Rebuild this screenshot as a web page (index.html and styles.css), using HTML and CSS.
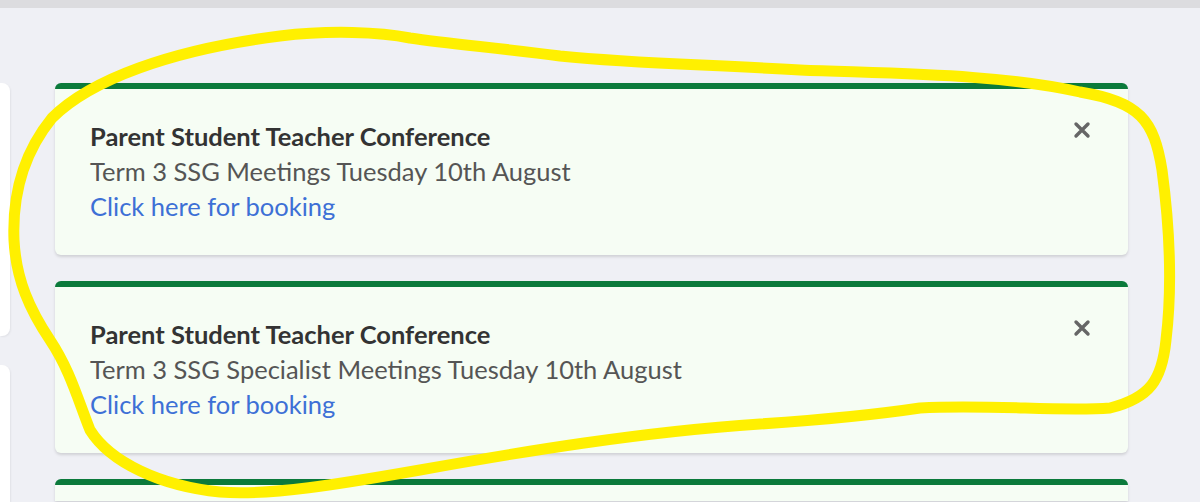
FILE: index.html
```html
<!DOCTYPE html>
<html>
<head>
<meta charset="utf-8">
<link rel="stylesheet" href="styles.css">
</head>
<body>
<div class="topbar"></div>
<div class="page">
  <aside class="side">
    <div class="side-block side-block-1"></div>
    <div class="side-block side-block-2"></div>
  </aside>
  <main class="feed">
    <div class="notice">
      <div class="notice-body">
        <div class="notice-title">Parent Student Teacher Conference</div>
        <div class="notice-text">Term 3 SSG Meetings Tuesday 10th August</div>
        <a class="notice-link" href="#">Click here for booking</a>
      </div>
      <button class="close" aria-label="Close">
        <svg width="22" height="22" viewBox="0 0 22 22"><path d="M5 5 L17 17 M17 5 L5 17" stroke="#666" stroke-width="3.4" stroke-linecap="round"/></svg>
      </button>
    </div>
    <div class="notice">
      <div class="notice-body">
        <div class="notice-title">Parent Student Teacher Conference</div>
        <div class="notice-text">Term 3 SSG Specialist Meetings Tuesday 10th August</div>
        <a class="notice-link" href="#">Click here for booking</a>
      </div>
      <button class="close" aria-label="Close">
        <svg width="22" height="22" viewBox="0 0 22 22"><path d="M5 5 L17 17 M17 5 L5 17" stroke="#666" stroke-width="3.4" stroke-linecap="round"/></svg>
      </button>
    </div>
    <div class="notice notice-partial"></div>
  </main>
</div>
<svg class="annotation" width="1200" height="502" viewBox="0 0 1200 502">
  <path d="M52 118 C 90 80, 170 50, 280 36 C 330 30, 380 32, 410 38 C 450 44, 500 48, 560 56 C 640 64, 700 64, 800 70 C 900 74, 1000 74, 1080 92 C 1140 102, 1154 120, 1162 170 C 1170 230, 1172 290, 1166 340 C 1162 380, 1150 398, 1110 408 C 1060 412, 990 404, 920 408 C 880 414, 820 420, 760 424 C 640 432, 520 452, 420 470 C 340 484, 270 496, 220 492 C 160 486, 110 462, 90 430 C 78 400, 70 370, 50 340 C 30 310, 16 280, 14 240 C 12 190, 26 150, 52 118 Z" fill="none" stroke="#fff000" stroke-width="11" stroke-linejoin="round"/>
</svg>
</body>
</html>
```
FILE: styles.css
```css
html, body {
  margin: 0;
  padding: 0;
}
body {
  background: #eff0f5;
  font-family: Lato, "Open Sans", "Liberation Sans", sans-serif;
  width: 1200px;
  height: 502px;
  overflow: hidden;
  position: relative;
}
.topbar {
  height: 8px;
  background: #dcdcdf;
}
.page {
  display: flex;
  padding-top: 75px;
  height: 419px;
  overflow: hidden;
}
.side {
  width: 10px;
  display: flex;
  flex-direction: column;
  gap: 29px;
}
.side-block {
  background: #ffffff;
  border-radius: 0 8px 8px 0;
  box-shadow: 1px 1px 2px rgba(0,0,0,0.06);
}
.side-block-1 { height: 253px; }
.side-block-2 { height: 137px; border-radius: 0 8px 0 0; }
.feed {
  margin-left: 45px;
  width: 1073px;
  display: flex;
  flex-direction: column;
  gap: 26px;
}
.notice {
  display: flex;
  justify-content: space-between;
  background: #f6fdf4;
  border-top: 6px solid #0b7a3b;
  border-radius: 6px;
  box-shadow: 0 2px 3px rgba(0,0,0,0.13);
  height: 166px;
  flex-shrink: 0;
}
.notice-partial {
  height: 16px;
  border-radius: 6px 6px 0 0;
}
.notice-body {
  padding: 30px 35px;
  display: flex;
  flex-direction: column;
  line-height: 35px;
  font-size: 25.5px;
}
.notice-title {
  font-weight: 700;
  color: #333;
}
.notice-text {
  color: #555;
}
.notice-link {
  color: #3d70d6;
  text-decoration: none;
}
.close {
  background: none;
  border: 0;
  padding: 0;
  margin: 30px 35px 0 0;
  width: 22px;
  height: 22px;
  cursor: pointer;
  align-self: flex-start;
}
.close svg { display: block; }
.annotation {
  position: absolute;
  left: 0;
  top: 0;
  pointer-events: none;
}
```
